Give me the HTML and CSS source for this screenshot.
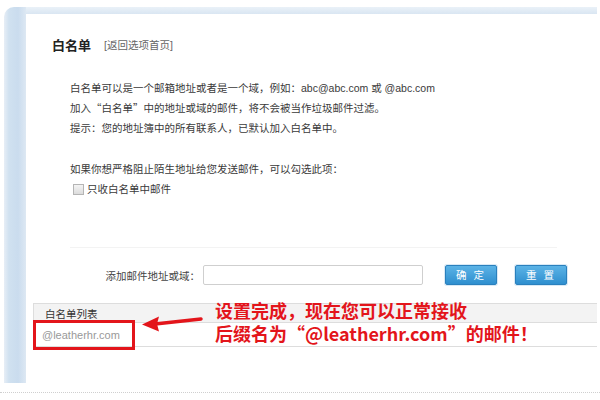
FILE: index.html
```html
<!DOCTYPE html>
<html lang="zh-CN">
<head>
<meta charset="utf-8">
<title>白名单</title>
<link rel="stylesheet" href="styles.css">
</head>
<body>
<div class="frame">
  <div class="panel">
    <div class="title-row">
      <span class="title">白名单</span>
      <span class="back">[返回选项首页]</span>
    </div>
    <div class="intro">
      <p>白名单可以是一个邮箱地址或者是一个域，例如：abc@abc.com 或 @abc.com</p>
      <p>加入<span class="q">“</span>白名单<span class="q">”</span>中的地址或域的邮件，将不会被当作垃圾邮件过滤。</p>
      <p>提示：您的地址簿中的所有联系人，已默认加入白名单中。</p>
    </div>
    <div class="strict">
      <p>如果你想严格阻止陌生地址给您发送邮件，可以勾选此项：</p>
      <label class="check"><span class="cb"></span>只收白名单中邮件</label>
    </div>
    <div class="divider"></div>
    <div class="add-row">
      <span class="add-label">添加邮件地址或域：</span>
      <span class="input"></span>
      <span class="btn btn-ok">确 定</span>
      <span class="btn btn-reset">重 置</span>
    </div>
    <div class="list">
      <div class="list-head">白名单列表</div>
      <div class="list-row">@leatherhr.com</div>
      <div class="mark-box"></div>
      <svg class="arrow" width="62" height="22" viewBox="0 0 62 22">
        <line x1="14" y1="12" x2="60" y2="7" stroke="#e3151b" stroke-width="3.5" stroke-linecap="round"/>
        <polygon points="1,12.5 18,4.5 16,12 18,19.5" fill="#e3151b"/>
      </svg>
      <div class="note">
        <div>设置完成，现在您可以正常接收</div>
        <div>后缀名为“@leatherhr.com”的邮件！</div>
      </div>
    </div>
  </div>
</div>
<div class="dots"></div>
</body>
</html>
```
FILE: styles.css
```css
html, body {
  margin: 0;
  padding: 0;
  background: #ffffff;
}
body {
  width: 600px;
  height: 400px;
  overflow: hidden;
  font-family: "Liberation Sans", "Noto Sans CJK SC", sans-serif;
  font-size: 10.5px;
  color: #3a3a3a;
}
p { margin: 0; }

.frame {
  margin: 7px 3px 0 4px;
  height: 376px;
  box-sizing: border-box;
  padding: 7px 0 0 22px;
  border-top-left-radius: 10px;
  background:
    linear-gradient(to right, #e7eef6 0, #d0e1f0 5px, #cadcee 14px, #dde8f3 22px) 0 0 / 22px 100% no-repeat,
    linear-gradient(to bottom, #eaf1f8 0, #d9e6f2 7px) 0 0 / 100% 7px repeat-x;
}
.panel {
  background: #ffffff;
  height: 100%;
  border-top-left-radius: 8px;
  padding-top: 21px;
  box-sizing: border-box;
}

.title-row {
  display: flex;
  align-items: center;
  height: 18px;
  padding-left: 26px;
}
.title {
  font-size: 13px;
  font-weight: bold;
  color: #222;
  font-family: "Noto Sans CJK SC", sans-serif;
}
.back {
  margin-left: 13px;
  font-size: 10.5px;
  color: #666;
}

.intro {
  margin-top: 25px;
  padding-left: 44px;
  line-height: 20px;
}
.q { font-family: "Noto Sans CJK SC", sans-serif; }

.strict {
  margin-top: 21px;
  padding-left: 44px;
  line-height: 20px;
}
.check {
  display: flex;
  align-items: center;
  padding-left: 3px;
}
.cb {
  width: 9px;
  height: 9px;
  border: 1px solid #b5b5b5;
  background: linear-gradient(#f4f4f4, #dcdcdc);
  margin-right: 3px;
}

.divider {
  margin: 48px 40px 0 44px;
  border-top: 1px solid #f3f3f3;
}

.add-row {
  margin-top: 17px;
  display: flex;
  align-items: center;
  height: 20px;
  padding-left: 79px;
}
.add-label {
  width: 95px;
  text-align: right;
  color: #444;
}
.input {
  margin-left: 3px;
  width: 218px;
  height: 18px;
  border: 1px solid #cfcfcf;
  border-radius: 2px;
  background: #fff;
}
.btn {
  width: 50px;
  height: 18px;
  border: 1px solid #2a80bd;
  border-radius: 2px;
  background: linear-gradient(#5bb3e6, #2f8fcf);
  color: #fff;
  font-size: 10.5px;
  line-height: 18px;
  text-align: center;
  letter-spacing: 2px;
  box-shadow: 0 0 0 1px #d8e9f5;
}
.btn-ok { margin-left: 22px; }
.btn-reset { margin-left: 18px; }

.list {
  position: relative;
  margin: 18px 0 0 7px;
}
.list-head {
  height: 18px;
  line-height: 20px;
  border: 1px solid #dddddd;
  border-right: none;
  background: #f3f3f3;
  padding-left: 11px;
  color: #333;
}
.list-row {
  height: 23px;
  line-height: 24px;
  border-bottom: 1px solid #dddddd;
  padding-left: 9px;
  font-size: 11px;
  color: #999;
}
.mark-box {
  position: absolute;
  left: 0;
  top: 17px;
  width: 96px;
  height: 24px;
  border: 3px solid #e3151b;
}
.arrow {
  position: absolute;
  left: 108px;
  top: 9px;
}
.note {
  position: absolute;
  left: 182px;
  top: -4px;
  white-space: nowrap;
  font-family: "Noto Sans CJK SC", sans-serif;
  font-weight: bold;
  font-size: 18px;
  line-height: 23px;
  color: #e3151b;
}

.dots {
  margin-top: 9px;
  border-top: 1px dotted #cfcfcf;
}
```
